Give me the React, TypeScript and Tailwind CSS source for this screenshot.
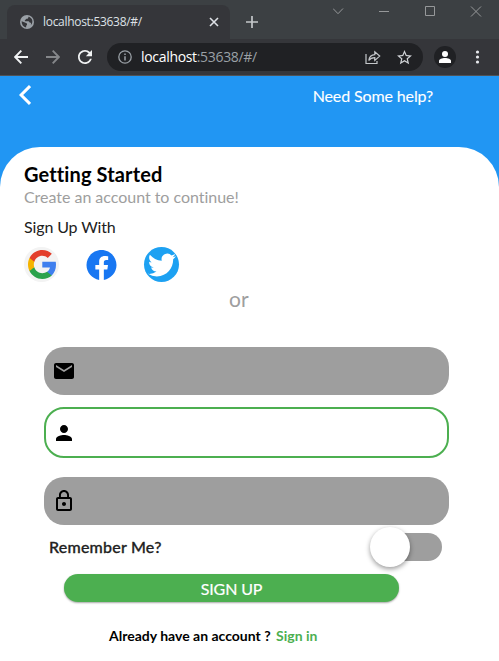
import React from "react";

const lato = "font-['Lato',sans-serif] whitespace-nowrap [font-variant-ligatures:none]";
const ui = "font-['Open_Sans','Noto_Sans',sans-serif] whitespace-nowrap";

function TitleBar() {
  return (
    <div className="flex h-[39px] bg-[#3c4043] text-[#dee1e6]">
      <div className="ml-[7px] mt-[5px] flex h-[34px] w-[223px] items-center rounded-t-[8px] bg-[#35363a] pl-[13px] pr-[11px]">
        <svg width="14" height="14" viewBox="0 0 14 14">
          <circle cx="7" cy="7" r="7" fill="#9aa0a6" />
          <path
            fill="#35363a"
            d="M1.600 6.300L5 7.600c.6.400 1.200.7 2 .8v1.500c-.7.300-.9 1-.9 2.500C3.300 12 1.500 9.600 1.600 6.300zM8.300 1.700c.3 1.300-.3 2-1.700 2.100-.9.100-.9 1.100-1.600 1.400-.5.300-.2 1 .4 1h3.100c.8 0 .8 1.300 1.500 1.400.9.100 1.200.8 1 1.600l-.3 1c1.700-1.500 2.100-3.700 1.300-5.700-.7-1.500-2.100-2.600-3.700-2.800z"
          />
        </svg>
        <span className={`${ui} ml-[9px] text-[12px] leading-4 tracking-[-0.3px]`}>localhost:53638/#/</span>
        <svg className="ml-auto" width="10" height="10" viewBox="0 0 10 10" fill="none" stroke="currentColor" strokeWidth="1.6">
          <path d="M1 1l8 8M9 1L1 9" />
        </svg>
      </div>
      <svg className="ml-[16px] mt-[16px]" width="12" height="12" viewBox="0 0 12 12" stroke="#c4c7ca" strokeWidth="1.7">
        <path d="M6 0v12M0 6h12" />
      </svg>
      <div className="ml-auto mr-[17px] mt-[6px] flex text-[#96989a]">
        <svg width="149" height="12" viewBox="0 0 149 12" fill="none" stroke="currentColor" strokeWidth="1">
          <path d="M0 2.500l5 5.200 5-5.200M46 5.500h10M92.500.5h9v9h-9zM138 .5l10 10M148 .5l-10 10" />
        </svg>
      </div>
    </div>
  );
}

function Toolbar() {
  return (
    <div className="flex h-[37px] items-center border-b border-[#505256] bg-[#35363a] pl-[14px] pr-[17px]">
      <svg width="14" height="14" viewBox="0 0 14 14" fill="none" stroke="#f1f3f4" strokeWidth="1.9">
        <path d="M14 7H1.500M7.300.7L1.200 7l6.100 6.300" />
      </svg>
      <svg className="ml-[18px]" width="14" height="14" viewBox="0 0 14 14" fill="none" stroke="#85878a" strokeWidth="1.900">
        <path d="M0 7h12.500M6.700.7L12.800 7l-6.100 6.300" />
      </svg>
      <svg className="ml-[18px]" width="14" height="14" viewBox="4 4 16 16" fill="#f1f3f4">
        <path d="M17.650 6.350C16.200 4.900 14.210 4 12 4c-4.420 0-7.990 3.580-7.990 8s3.570 8 7.990 8c3.730 0 6.840-2.550 7.730-6h-2.080c-.82 2.330-3.040 4-5.650 4-3.310 0-6-2.690-6-6s2.690-6 6-6c1.660 0 3.140.69 4.220 1.780L13 11h7V4l-2.350 2.350z" />
      </svg>
      <div className="ml-[15px] flex h-[28px] w-[316px] items-center rounded-full bg-[#202124] pl-[11px] pr-[11px]">
        <svg width="14" height="14" viewBox="0 0 14 14" fill="none" stroke="#9aa0a6" strokeWidth="1.300">
          <circle cx="7" cy="7" r="6.200" />
          <path d="M7 6.200v4.300M7 3.500v1.500" strokeWidth="1.500" />
        </svg>
        <span className={`${ui} ml-[9px] text-[14px] leading-5 tracking-[-0.32px] text-white`}>
          localhost<span className="text-[#9aa0a6]">:53638/#/</span>
        </span>
        <svg className="ml-auto" width="16" height="15" viewBox="0 0 16 15" fill="none" stroke="#c4c7ca" strokeWidth="1.200">
          <path d="M1 4v9.500h11V11" />
          <path d="M3.800 10.500c.4-3.600 2.500-5.700 6-5.900V1.800l4.900 4.300-4.900 4.300V7.600c-2.700 0-4.600.8-6 2.900z" />
        </svg>
        <svg className="ml-[16px]" width="15" height="15" viewBox="2 2 20 20" fill="#d0d3d6">
          <path d="M22 9.240l-7.190-.62L12 2 9.190 8.630 2 9.240l5.460 4.730L5.820 21 12 17.270 18.180 21l-1.630-7.030L22 9.240zM12 15.400l-3.760 2.270 1-4.280-3.320-2.880 4.380-.38L12 6.100l1.710 4.040 4.380.38-3.320 2.880 1 4.280L12 15.400z" />
        </svg>
      </div>
      <div className="ml-[11px] flex size-[22px] items-center justify-center rounded-full bg-[#202124]">
        <svg width="12" height="12" viewBox="0 0 12 12" fill="#fff">
          <circle cx="6" cy="3" r="3" />
          <path d="M0 12V10c0-2 3-3 6-3s6 1 6 3v2z" />
        </svg>
      </div>
      <svg className="ml-auto" width="14" height="14" viewBox="0 0 14 14" fill="#e8eaed">
        <circle cx="9.500" cy="2" r="1.600" />
        <circle cx="9.500" cy="7" r="1.600" />
        <circle cx="9.500" cy="12" r="1.600" />
      </svg>
    </div>
  );
}

function Socials() {
  return (
    <div className="flex h-[35px] items-center">
      <div className="flex size-[35px] items-center justify-center rounded-full bg-[#f3f3f3]">
        <svg width="28" height="29" viewBox="1 1 21.560 22" preserveAspectRatio="none">
          <path fill="#3f7fee" d="M22.560 12.250c0-.78-.07-1.530-.2-2.250H12v4.260h5.920c-.26 1.370-1.040 2.530-2.210 3.310v2.770h3.570c2.080-1.920 3.280-4.740 3.280-8.090z" />
          <path fill="#2ba24c" d="M12 23c2.970 0 5.460-.98 7.280-2.660l-3.570-2.770c-.98.66-2.230 1.060-3.710 1.060-2.860 0-5.290-1.930-6.160-4.530H2.180v2.840C3.990 20.530 7.700 23 12 23z" />
          <path fill="#f5b400" d="M5.840 14.090c-.22-.66-.35-1.360-.35-2.090s.13-1.430.35-2.090V7.070H2.180C1.430 8.550 1 10.220 1 12s.43 3.450 1.180 4.930l2.850-2.220.81-.62z" />
          <path fill="#e33e2b" d="M12 5.380c1.620 0 3.060.56 4.210 1.640l3.150-3.150C17.450 2.090 14.970 1 12 1 7.700 1 3.990 3.470 2.180 7.070l3.660 2.840c.87-2.600 3.300-4.530 6.160-4.530z" />
        </svg>
      </div>
      <svg className="ml-[27px]" width="31" height="30" viewBox="0 0 24 24">
        <path fill="#1877f2" d="M24 12.073c0-6.627-5.373-12-12-12s-12 5.373-12 12c0 5.990 4.388 10.954 10.125 11.854v-8.385H7.078v-3.470h3.047V9.430c0-3.007 1.792-4.669 4.533-4.669 1.312 0 2.686.235 2.686.235v2.953H15.830c-1.491 0-1.956.925-1.956 1.874v2.250h3.328l-.532 3.470h-2.796v8.385C19.612 23.027 24 18.062 24 12.073z" />
      </svg>
      <div className="ml-[27px] flex size-[35px] items-center justify-center rounded-full bg-[#1da1f2]">
        <svg width="28" height="28" viewBox="0 0 24 24" fill="#fff">
          <path d="M23.953 4.570a10 10 0 01-2.825.775 4.958 4.958 0 002.163-2.723c-.951.555-2.005.959-3.127 1.184a4.920 4.920 0 00-8.384 4.482C7.690 8.095 4.067 6.130 1.640 3.162a4.822 4.822 0 00-.666 2.475c0 1.710.870 3.213 2.188 4.096a4.904 4.904 0 01-2.228-.616v.060a4.923 4.923 0 003.946 4.827 4.996 4.996 0 01-2.212.085 4.936 4.936 0 004.604 3.417 9.867 9.867 0 01-6.102 2.105c-.390 0-.779-.023-1.170-.067a13.995 13.995 0 007.557 2.209c9.053 0 13.998-7.496 13.998-13.985 0-.210 0-.420-.015-.630A9.935 9.935 0 0024 4.590z" />
        </svg>
      </div>
    </div>
  );
}

function Field({ path, className }: { path: string; className: string }) {
  return (
    <div className={`flex items-center rounded-[20px] ${className}`}>
      <svg width="24" height="24" viewBox="0 0 24 24">
        <path d={path} />
      </svg>
    </div>
  );
}

export default function App() {
  return (
    <div className="flex h-[661px] w-[499px] flex-col overflow-hidden bg-white">
      <TitleBar />
      <Toolbar />
      <div className="flex grow flex-col bg-[#2196f3]">
        <div className="flex h-[71px] items-start justify-between pl-[19px] pr-[66px]">
          <svg className="mt-[9px]" width="12" height="20" viewBox="0 0 12 20" fill="none" stroke="#fff" strokeWidth="3">
            <path d="M11 1.100L2.100 10l8.900 8.900" />
          </svg>
          <span className={`${lato} mt-[10px] text-[16px] leading-5 tracking-[-0.12px] text-white [-webkit-text-stroke:0.1px]`}>
            Need Some help?
          </span>
        </div>
        <main className={`${lato} flex grow flex-col rounded-t-[40px] bg-white pt-[15px]`}>
          <div className="flex flex-col pl-[24px]">
            <h1 className="text-[20px] font-bold leading-[25px] tracking-[0.12px] text-black">Getting Started</h1>
            <p className="text-[16px] leading-5 tracking-[-0.03px] text-[#9e9e9e]">Create an account to continue!</p>
            <p className="mb-[10px] mt-[10px] text-[16px] leading-5 tracking-[-0.13px] text-[#212121]">Sign Up With</p>
            <Socials />
          </div>
          <p className="mt-[5px] pl-[229px] text-[21px] leading-6 text-[#9e9e9e]">or</p>
          <form className="mt-[36px] flex flex-col px-[44px]">
            <div className="flex w-[405px] flex-col">
              <Field
                className="h-[48px] bg-[#9e9e9e] pl-[8px]"
                path="M20 4H4c-1.100 0-1.990.9-1.990 2L2 18c0 1.100.9 2 2 2h16c1.100 0 2-.9 2-2V6c0-1.100-.9-2-2-2zm0 4l-8 5-8-5V6l8 5 8-5v2z"
              />
              <Field
                className="mt-[12px] h-[51px] border-2 border-[#4caf50] bg-white pl-[6px]"
                path="M12 12c2.210 0 4-1.790 4-4s-1.790-4-4-4-4 1.790-4 4 1.790 4 4 4zm0 2c-2.670 0-8 1.340-8 4v2h16v-2c0-2.660-5.330-4-8-4z"
              />
              <Field
                className="mt-[19px] h-[48px] bg-[#9e9e9e] pl-[8px]"
                path="M12 17c1.100 0 2-.9 2-2s-.9-2-2-2-2 .9-2 2 .9 2 2 2zm6-9h-1V6c0-2.760-2.240-5-5-5S7 3.240 7 6v2H6c-1.100 0-2 .9-2 2v10c0 1.100.9 2 2 2h12c1.100 0 2-.9 2-2V10c0-1.100-.9-2-2-2zM8.900 6c0-1.710 1.390-3.100 3.100-3.100s3.100 1.390 3.100 3.100v2H8.900V6zM18 20H6V10h12v10z"
              />
            </div>
            <div className="flex h-[44px] items-center justify-between pl-[5px] pr-[13.5px]">
              <span className="text-[16px] font-medium leading-5 tracking-[0.22px] text-[#212121] [-webkit-text-stroke:0.3px]">
                Remember Me?
              </span>
              <div className="flex h-[28px] w-[66px] items-center rounded-full bg-[#9e9e9e]">
                <div className="-ml-[6px] size-[40px] shrink-0 rounded-full bg-white shadow-[0_2px_5px_rgba(0,0,0,0.4)]" />
              </div>
            </div>
            <button
              type="button"
              className="ml-[20px] mt-[5px] flex h-[28px] w-[335px] items-center justify-center rounded-full bg-[#4caf50] pt-[2px] text-[16px] leading-5 tracking-[-0.12px] text-white shadow-[0_1px_2px_rgba(0,0,0,0.35)] [-webkit-text-stroke:0.2px]"
            >
              SIGN UP
            </button>
          </form>
          <p className="mt-[24px] flex gap-[5.5px] pl-[109px] text-[14px] font-bold leading-5 text-black">
            <span>Already have an account ?</span>
            <span className="text-[#4caf50]">Sign in</span>
          </p>
        </main>
      </div>
    </div>
  );
}
